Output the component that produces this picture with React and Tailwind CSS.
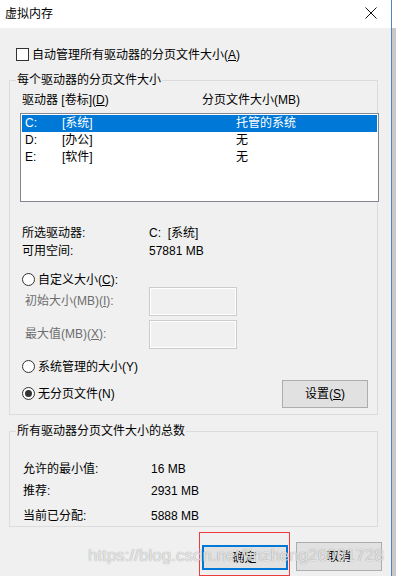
const font = "font-['Liberation_Sans','Noto_Sans_CJK_SC',sans-serif]";

function Radio({ checked }) {
    return (
        <span className="flex h-[13px] w-[13px] shrink-0 items-center justify-center rounded-full border border-[#333333] bg-white">
            {checked && <span className="h-[7px] w-[7px] rounded-full bg-[#333333]" />}
        </span>
    );
}

function GroupBox({ label, className, children }) {
    return (
        <div className={`ml-[9px] w-[369px] border border-[#dcdcdc] ${className}`}>
            <div className="-mt-[9px] flex h-[16px] items-center pl-[6px]">
                <span className="bg-[#f0f0f0] px-[1px] leading-[16px]">{label}</span>
            </div>
            {children}
        </div>
    );
}

function DisabledBox() {
    return <div className="h-[29px] w-[88px] border border-[#cccccc] bg-[#f0f0f0] shadow-[inset_1px_1px_0_#ffffff,inset_-1px_-1px_0_#ffffff]" />;
}

export default function App() {
    const drives = [
        { letter: 'C:', label: '[系统]', size: '托管的系统', selected: true },
        { letter: 'D:', label: '[办公]', size: '无' },
        { letter: 'E:', label: '[软件]', size: '无' },
    ];

    const totals = [
        { k: '允许的最小值:', v: '16 MB', h: 'h-[18px] mt-[21px]' },
        { k: '推荐:', v: '2931 MB', h: 'h-[18px] mt-[4px]' },
        { k: '当前已分配:', v: '5888 MB', h: 'h-[18px] mt-[7px]' },
    ];

    return (
        <div className={`relative flex h-[576px] w-[396px] overflow-hidden bg-[#f0f0f0] text-[12px] text-black ${font}`}>
            <div className="flex w-[391px] flex-col">
                {/* title bar */}
                <div className="flex h-[28px] items-center justify-between bg-white pl-[5px] pr-[14px]">
                    <span className="leading-[16px]">虚拟内存</span>
                    <svg width="12" height="12" viewBox="0 0 12 12" className="mt-[-1px]">
                        <path d="M0.5 0.5 L11.5 11.5 M11.5 0.5 L0.5 11.5" stroke="#111111" strokeWidth="1" />
                    </svg>
                </div>

                {/* auto manage */}
                <div className="mt-[19px] flex h-[16px] items-center gap-[3px] pl-[16px]">
                    <span className="h-[13px] w-[13px] border border-[#333333] bg-white" />
                    <span>自动管理所有驱动器的分页文件大小(<u>A</u>)</span>
                </div>

                <GroupBox label="每个驱动器的分页文件大小" className="mt-[17px] h-[336px]">
                    <div className="mt-[4px] flex h-[16px] items-center pl-[12px]">
                        <span className="w-[180px]">驱动器 [卷标](<u>D</u>)</span>
                        <span>分页文件大小(MB)</span>
                    </div>
                    <div className="ml-[10px] mt-[5px] h-[89px] w-[359px] border border-[#828790] bg-white p-[1px]">
                        {drives.map((d) => (
                            <div
                                key={d.letter}
                                className={`flex h-[17px] items-center pl-[3px] ${d.selected ? 'bg-[#0078d7] text-white' : ''}`}
                            >
                                <span className="w-[37px]">{d.letter}</span>
                                <span className="w-[174px]">{d.label}</span>
                                <span>{d.size}</span>
                            </div>
                        ))}
                    </div>

                    <div className="mt-[22px] flex h-[18px] items-center pl-[12px]">
                        <span className="w-[127px]">所选驱动器:</span>
                        <span>C:&nbsp;&nbsp;[系统]</span>
                    </div>
                    <div className="flex h-[18px] items-center pl-[12px]">
                        <span className="w-[127px]">可用空间:</span>
                        <span>57881 MB</span>
                    </div>

                    <div className="mt-[12px] flex h-[16px] items-center gap-[3px] pl-[12px]">
                        <Radio />
                        <span>自定义大小(<u>C</u>):</span>
                    </div>
                    <div className="mt-[-1px] flex items-center pl-[15px] text-[#6d6d6d]">
                        <span className="w-[124px]">初始大小(MB)(<u>I</u>):</span>
                        <DisabledBox />
                    </div>
                    <div className="mt-[4px] flex items-center pl-[15px] text-[#6d6d6d]">
                        <span className="w-[124px]">最大值(MB)(<u>X</u>):</span>
                        <DisabledBox />
                    </div>

                    <div className="mt-[10px] flex h-[16px] items-center gap-[3px] pl-[12px]">
                        <Radio />
                        <span>系统管理的大小(Y)</span>
                    </div>
                    <div className="mt-[5px] flex items-center pr-[9px] pl-[12px]">
                        <div className="flex h-[16px] flex-1 items-center gap-[3px]">
                            <Radio checked />
                            <span>无分页文件(N)</span>
                        </div>
                        <button className="h-[28px] w-[86px] border border-[#adadad] bg-[#e1e1e1]">
                            设置(<u>S</u>)
                        </button>
                    </div>
                </GroupBox>

                <GroupBox label="所有驱动器分页文件大小的总数" className="mt-[16px] h-[96px]">
                    {totals.map((t) => (
                        <div key={t.k} className={`flex items-center pl-[13px] ${t.h}`}>
                            <span className="w-[128px]">{t.k}</span>
                            <span>{t.v}</span>
                        </div>
                    ))}
                </GroupBox>

                {/* dialog buttons */}
                <div className="mt-[5px] flex items-start pl-[199px]">
                    <div className="flex h-[44px] w-[91px] items-start justify-center border border-[#ef3b3b] pt-[12px]">
                        <button className="h-[25px] w-[86px] border-2 border-[#0078d7] bg-[#e1e1e1]">确定</button>
                    </div>
                    <button className="ml-[6px] mt-[10px] h-[29px] w-[86px] border border-[#adadad] bg-[#e1e1e1]">取消</button>
                </div>
            </div>

            {/* window edge */}
            <div className="w-[1px] bg-[#4a86c0]" />
            <div className="flex w-[4px] flex-col">
                <div className="h-[28px] bg-white" />
                <div className="flex-1 bg-[#c9c9c9]" />
            </div>

            {/* watermark */}
            <div className="pointer-events-none absolute left-[88px] top-[545px] font-['Liberation_Sans',sans-serif] text-[17px] leading-[22px] text-white/75 [text-shadow:0_0_1px_rgba(0,0,0,0.45)]">
                https://blog.csdn.net/linzheng26001728
            </div>
        </div>
    );
}
